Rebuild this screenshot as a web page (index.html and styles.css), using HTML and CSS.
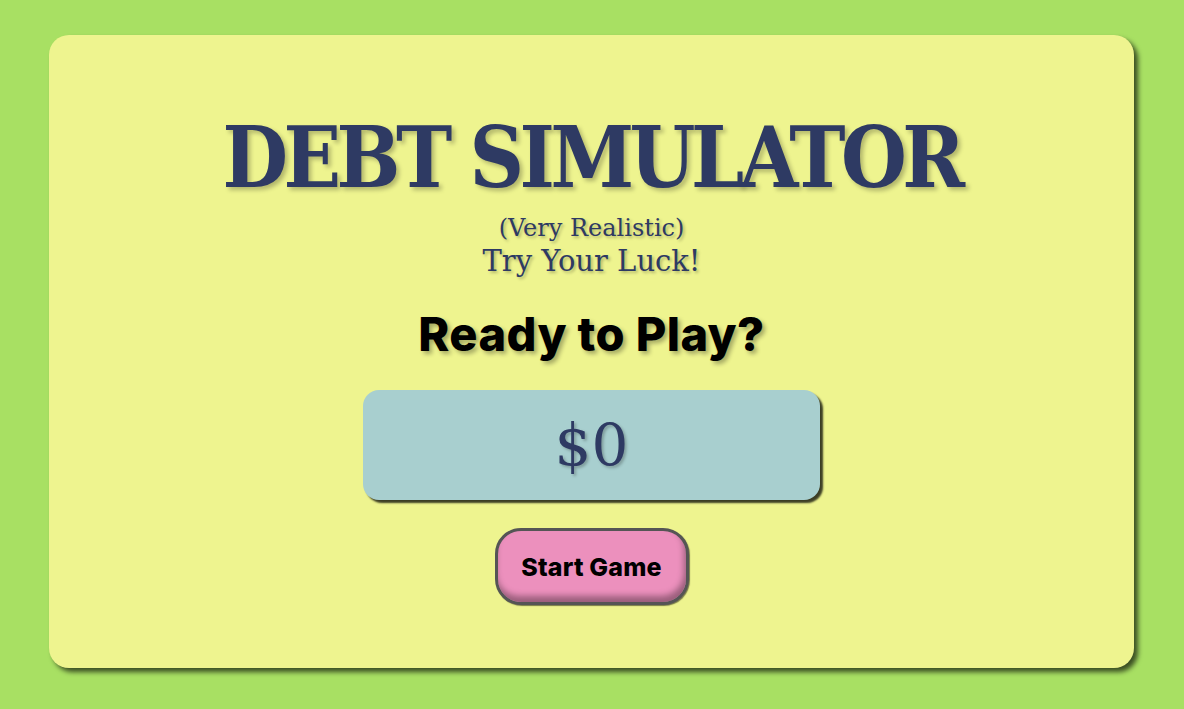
FILE: index.html
```html
<!DOCTYPE html>
<html>
<head>
<meta charset="utf-8">
<link rel="stylesheet" href="styles.css">
</head>
<body>
<main class="card">
  <h1 class="title">DEBT SIMULATOR</h1>
  <p class="sub">(Very Realistic)</p>
  <p class="luck">Try Your Luck!</p>
  <h2 class="ready">Ready to Play?</h2>
  <div class="money">$0</div>
  <button class="start">Start Game</button>
</main>
</body>
</html>
```
FILE: styles.css
```css
html, body { margin: 0; padding: 0; }
body {
  background: #a8e063;
  width: 1184px;
  height: 709px;
  padding: 35px 50px 41px 49px;
  box-sizing: border-box;
}
.card {
  background: #eef48f;
  border-radius: 20px;
  box-shadow: 4px 4px 5px rgba(0,0,0,0.65);
  height: 633px;
  display: flex;
  flex-direction: column;
  align-items: center;
  box-sizing: border-box;
  padding-top: 80px;
}
.title {
  margin: 0;
  font-family: "DejaVu Serif", serif;
  font-stretch: condensed;
  font-weight: bold;
  font-size: 84px;
  line-height: 85px;
  letter-spacing: -4.5px;
  color: #2e3a63;
  text-shadow: 3px 3px 4px rgba(0,0,0,0.25);
}
.sub {
  margin: 13px 0 0;
  font-family: "DejaVu Serif", serif;
  font-size: 24px;
  line-height: 30px;
  color: #2e3a63;
  text-shadow: 2px 2px 3px rgba(0,0,0,0.25);
}
.luck {
  margin: 0;
  font-family: "DejaVu Serif", serif;
  font-size: 29px;
  line-height: 36px;
  color: #2e3a63;
  text-shadow: 2px 2px 3px rgba(0,0,0,0.25);
}
.ready {
  margin: 27px 0 0;
  font-family: "Inter", sans-serif;
  font-weight: 800;
  font-size: 47px;
  line-height: 56px;
  letter-spacing: 0.4px;
  color: #000;
  text-shadow: 3px 3px 4px rgba(0,0,0,0.3);
}
.money {
  margin-top: 28px;
  width: 457px;
  height: 110px;
  background: #a8cfcf;
  border-radius: 16px;
  box-shadow: 3px 3px 2px rgba(0,0,0,0.75);
  display: flex;
  align-items: center;
  justify-content: center;
  font-family: "DejaVu Serif", serif;
  font-size: 58px;
  color: #2e3a63;
  text-shadow: 2px 2px 3px rgba(0,0,0,0.25);
}
.start {
  margin-top: 28px;
  width: 194px;
  height: 77px;
  background: #ec90bd;
  border: 3px solid #555;
  border-radius: 26px;
  box-shadow: inset -2px -6px 6px rgba(0,0,0,0.35), 1px 1px 1px rgba(0,0,0,0.5);
  font-family: "Inter", sans-serif;
  font-weight: 800;
  font-size: 25px;
  letter-spacing: 0.2px;
  color: #000;
  padding: 0;
}
```
